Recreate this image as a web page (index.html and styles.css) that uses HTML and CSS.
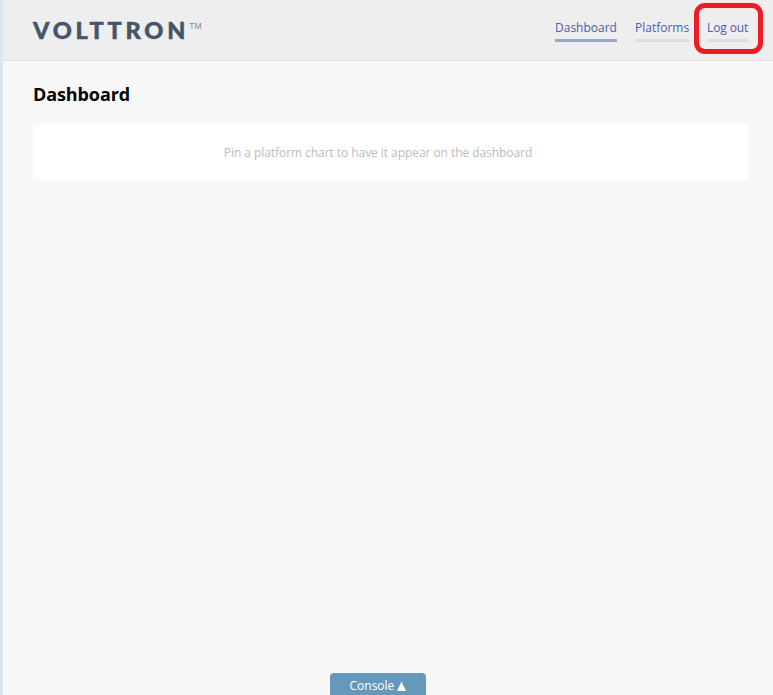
FILE: index.html
```html
<!DOCTYPE html>
<html lang="en">
<head>
<meta charset="utf-8">
<title>VOLTTRON</title>
<link rel="stylesheet" href="styles.css">
</head>
<body>
<header class="header">
  <div class="logo"><span class="logo-name">VOLTTRON</span><span class="logo-tm">TM</span></div>
  <nav class="nav">
    <a class="nav-item active">Dashboard</a>
    <a class="nav-item">Platforms</a>
    <a class="nav-item highlighted">Log out</a>
  </nav>
</header>
<main class="main">
  <h1 class="title">Dashboard</h1>
  <section class="card"><p class="empty">Pin a platform chart to have it appear on the dashboard</p></section>
</main>
<footer class="footer">
  <div class="console">Console <svg class="arrow" viewBox="0 0 9 10"><path d="M4.5 0.5L9 10H0z" fill="#fff"/></svg></div>
</footer>
</body>
</html>
```

FILE: styles.css
```css
*, *::after { box-sizing: border-box; }
body {
  margin: 0;
  height: 695px;
  display: flex;
  flex-direction: column;
  background: #f8f8f8;
  border-left: 3px solid #dae5f0;
  font-family: "Open Sans", "Noto Sans", sans-serif;
  font-size: 12px;
  overflow: hidden;
}
.header {
  height: 61px;
  flex: none;
  display: flex;
  justify-content: space-between;
  align-items: flex-start;
  padding: 0 25px 0 30px;
  background: #eeeeee;
  border-bottom: 1px solid #dcdcdc;
}
.logo { display: flex; align-items: flex-start; color: #45566a; }
.logo-name {
  font: 900 23.5px/30px Lato, sans-serif;
  letter-spacing: 3.8px;
  margin-top: 15px;
  -webkit-text-stroke: 0.5px #45566a;
}
.logo-tm { font: 8.5px/10px "Liberation Sans", sans-serif; margin-top: 21px; color: #85898f; }
.nav { display: grid; grid-template-columns: 62px 54px 41px; column-gap: 18px; padding-top: 18px; }
.nav-item {
  position: relative;
  height: 24px;
  line-height: 19px;
  color: #5558b0;
  border-bottom: 3px solid #dddddd;
  white-space: nowrap;
}
.nav-item.active { border-bottom-color: #9da6c9; }
.highlighted { letter-spacing: -0.1px; }
.highlighted::after {
  content: "";
  position: absolute;
  left: -13px;
  top: -15px;
  width: 69px;
  height: 51px;
  border: 5px solid #ed1c24;
  border-radius: 11px;
}
.main { flex: 1; padding: 20px 25px 0 30px; }
.title { margin: 0; font-size: 18px; line-height: 26px; font-weight: 700; color: #000; letter-spacing: -0.1px; }
.card {
  height: 54px;
  margin-top: 18px;
  padding-right: 25px;
  display: flex;
  align-items: center;
  justify-content: center;
  background: #fff;
  border-radius: 4px;
}
.empty { margin: 0; color: #bbbbbb; letter-spacing: -0.06px; }
.footer { display: flex; justify-content: center; padding-right: 20px; }
.console {
  width: 96px;
  height: 22px;
  line-height: 25px;
  text-align: center;
  background: #6698bc;
  color: #fff;
  border-radius: 4px 4px 0 0;
}
.arrow { width: 9px; height: 10px; vertical-align: -1px; }
```
